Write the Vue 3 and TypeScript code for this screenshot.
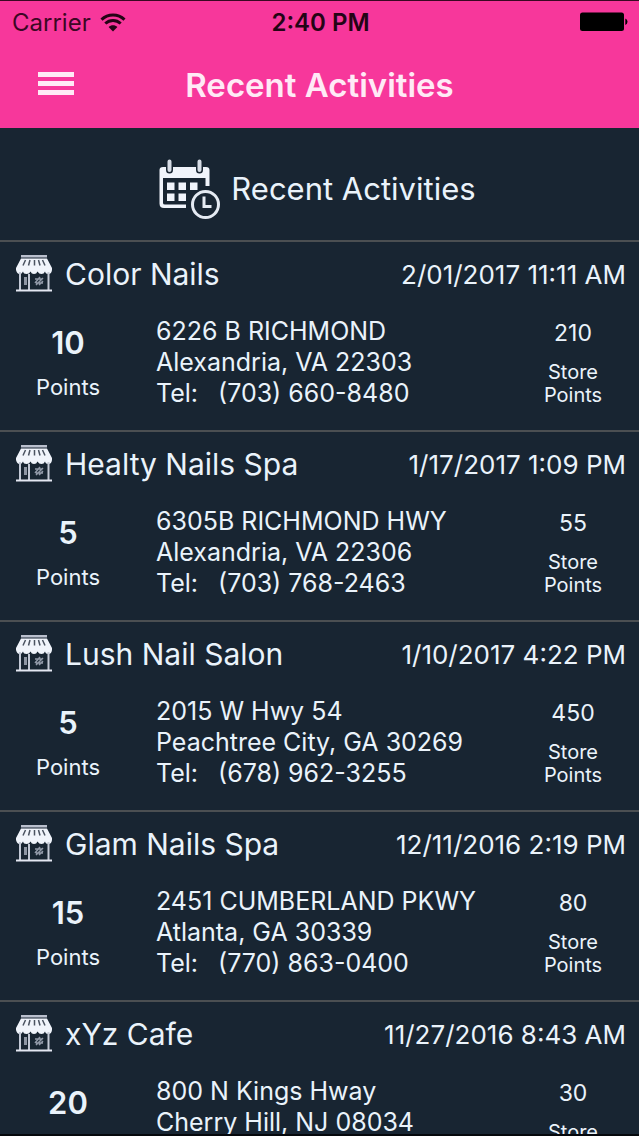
<script setup lang="ts">
interface Activity {
  store: string
  date: string
  points: number
  street: string
  city: string
  phone: string
  storePoints: number
}

const activities: Activity[] = [
  { store: 'Color Nails', date: '2/01/2017 11:11 AM', points: 10, street: '6226 B RICHMOND', city: 'Alexandria, VA 22303', phone: '(703) 660-8480', storePoints: 210 },
  { store: 'Healty Nails Spa', date: '1/17/2017 1:09 PM', points: 5, street: '6305B RICHMOND HWY', city: 'Alexandria, VA 22306', phone: '(703) 768-2463', storePoints: 55 },
  { store: 'Lush Nail Salon', date: '1/10/2017 4:22 PM', points: 5, street: '2015 W Hwy 54', city: 'Peachtree City, GA 30269', phone: '(678) 962-3255', storePoints: 450 },
  { store: 'Glam Nails Spa', date: '12/11/2016 2:19 PM', points: 15, street: '2451 CUMBERLAND PKWY', city: 'Atlanta, GA 30339', phone: '(770) 863-0400', storePoints: 80 },
  { store: 'xYz Cafe', date: '11/27/2016 8:43 AM', points: 20, street: '800 N Kings Hway', city: 'Cherry Hill, NJ 08034', phone: '', storePoints: 30 },
]
</script>

<template>
  <div class="screen">
    <header class="top">
      <div class="status">
        <div class="carrier">
          <span>Carrier</span>
          <svg class="wifi" viewBox="0 0 26 19" aria-hidden="true">
            <path d="M1.500 6.600C8 .4 18 .4 24.500 6.600" />
            <path d="M5.300 10.500C9.800 6.500 16.200 6.500 20.700 10.500" />
            <path class="dot" d="M8.600 14C11 11.600 15 11.600 17.400 14L13 18.500Z" />
          </svg>
        </div>
        <strong class="clock">2:40 PM</strong>
        <svg class="battery" viewBox="0 0 50 20" aria-hidden="true">
          <rect x="1" y="0.500" width="44" height="18.500" rx="2.500" />
          <path d="M46.300 6.500Q48.500 7.500 48.500 9.800T46.300 13Z" />
        </svg>
      </div>
      <div class="nav">
        <button class="menu" type="button" aria-label="Menu">
          <span></span><span></span><span></span>
        </button>
        <h1>Recent Activities</h1>
      </div>
    </header>

    <div class="section">
      <svg class="calendar" viewBox="0 0 62 62" aria-hidden="true">
        <path class="fill" d="M4 9H47Q50.500 9 50.500 12V28H46.500V20H4V45Q4 46.500 6 46.500H27V50H5Q.5 50 .5 45.500V12Q.5 9 4 9Z" />
        <path class="gap" d="M10.500 4V12M40.500 4V12" />
        <path class="ring" d="M10.500 3.500V12M40.500 3.500V12" />
        <path class="fill" d="M8 24.500H15.500V32H8ZM19.500 24.500H27V32H19.500ZM31 24.500H38.500V32H31ZM8 35.500H15.500V43H8ZM19.500 35.500H27V43H19.500Z" />
        <circle class="face" cx="46.500" cy="46.500" r="16.500" />
        <circle class="clock-ring" cx="46.500" cy="46.500" r="13" />
        <path class="hands" d="M45 38.500V48.500H52.500" />
      </svg>
      <h2>Recent Activities</h2>
    </div>

    <main class="list">
      <article v-for="item in activities" :key="item.store" class="activity">
        <div class="head">
          <svg class="shop" viewBox="0 0 36 38" aria-hidden="true">
            <path class="pale" d="M5 1H31V3.500H5Z" />
            <path class="fill" d="M5 4.500H31L36 14V16Q35.500 20 32.500 20T29 17.500Q28 20 25.500 20T21.500 17.500Q20.500 20 18 20T14.500 17.500Q13.500 20 10.500 20T7 17.500Q6 20 3.500 20T0 16V14Z" />
            <path class="stripe" d="M9.500 6L7 11.500M14 6L12.500 11.500M18.500 6V11.500M22.500 6L24 11.500M26.500 6L29 11.500" />
            <path class="frame" d="M4 18V36M32.500 18V36M13 20V36" />
            <path class="floor" d="M0 36.500H36" />
            <path class="pane" d="M8 23H11V31H8Z" />
            <path class="shine" d="M19 29L24 23M20 31L27 24M23 31L27 27M19 25H26M20 29H27" />
          </svg>
          <h3>{{ item.store }}</h3>
          <time>{{ item.date }}</time>
        </div>
        <div class="body">
          <div class="earned">
            <strong>{{ item.points }}</strong>
            <span>Points</span>
          </div>
          <address>
            <span>{{ item.street }}</span>
            <span>{{ item.city }}</span>
            <span v-if="item.phone" class="tel"><span>Tel:</span><span>{{ item.phone }}</span></span>
          </address>
          <div class="balance">
            <b>{{ item.storePoints }}</b>
            <span>Store Points</span>
          </div>
        </div>
      </article>
    </main>
  </div>
</template>

<style>
html,
body {
  background: #182532;
}
</style>

<style scoped>
.screen {
  display: flex;
  flex-direction: column;
  box-sizing: border-box;
  height: 100vh;
  border-bottom: 2px solid #05080c;
  background: #182532;
  color: #eaf3fb;
  font-family: Inter, "Liberation Sans", sans-serif;
}

h1,
h2,
h3 {
  margin: 0;
}

.top {
  flex: none;
  border-top: 1px solid #3a0822;
  background: #f7379b;
}

.status {
  display: grid;
  grid-template-columns: 1fr auto 1fr;
  align-items: center;
  height: 42px;
  padding: 0 10px 0 12px;
  color: #3c0724;
  font-size: 24px;
}

.carrier {
  display: flex;
  align-items: center;
  gap: 9px;
}

.wifi {
  width: 26px;
  height: 19px;
  fill: none;
  stroke: #240415;
  stroke-width: 3;
}

.wifi .dot {
  fill: #240415;
  stroke: none;
}

.clock {
  color: #240415;
  font-weight: 600;
}

.battery {
  justify-self: end;
  width: 50px;
  height: 20px;
}

.nav {
  display: grid;
  grid-template-columns: 80px 1fr 80px;
  align-items: center;
  height: 85px;
}

.menu {
  display: flex;
  flex-direction: column;
  gap: 4px;
  justify-self: end;
  width: 42px;
  padding: 0 6px 4px 0;
  border: 0;
  background: none;
}

.menu span {
  height: 5px;
  background: #ffeaf6;
}

h1 {
  padding-bottom: 2px;
  color: #ffeaf6;
  font-size: 33px;
  font-weight: 600;
  line-height: 40px;
  text-align: center;
}

.section {
  display: flex;
  flex: none;
  align-items: center;
  justify-content: center;
  gap: 10px;
  height: 112px;
  padding: 10px 4px 0 0;
  box-sizing: border-box;
}

.calendar {
  width: 62px;
  height: 62px;
}

.fill {
  fill: #f0f4fb;
}

.gap {
  fill: none;
  stroke: #182532;
  stroke-width: 7;
  stroke-linecap: round;
}

.ring {
  fill: none;
  stroke: #d6dce5;
  stroke-width: 4;
  stroke-linecap: round;
}

.face {
  fill: #182532;
}

.clock-ring,
.hands {
  fill: none;
  stroke: #e4eaf2;
  stroke-width: 3;
}

h2 {
  font-size: 31px;
  font-weight: 400;
  line-height: 40px;
}

.list {
  flex: 1;
  min-height: 0;
  overflow-y: auto;
  scrollbar-width: none;
}

.activity {
  box-sizing: border-box;
  min-height: 190px;
  border-top: 2px solid #4b4f52;
}

.head {
  display: flex;
  align-items: center;
  height: 64px;
  padding: 0 13px 0 16px;
}

.shop {
  flex: none;
  width: 36px;
  height: 38px;
  margin: 0 13px 3px 0;
}

.pale {
  fill: #b9bfcd;
}

.stripe {
  fill: none;
  stroke: #4a5361;
  stroke-width: 1.5;
}

.frame {
  fill: none;
  stroke: #c3c9d6;
  stroke-width: 2;
}

.floor {
  stroke: #e4e8f2;
  stroke-width: 2;
}

.pane {
  fill: #8d95a3;
}

.shine {
  fill: none;
  stroke: #9199a8;
  stroke-width: 1.5;
}

h3 {
  flex: 1;
  font-size: 30px;
  font-weight: 400;
  line-height: 40px;
}

time {
  font-size: 26px;
  white-space: nowrap;
}

.body {
  display: grid;
  grid-template-columns: 136px 1fr 132px;
  column-gap: 20px;
  align-items: start;
}

.earned,
address,
.balance {
  display: flex;
  flex-direction: column;
}

.earned,
.balance {
  align-items: center;
  text-align: center;
}

.earned strong {
  margin-top: 17px;
  font-size: 31px;
  font-weight: 600;
  line-height: 40px;
}

.earned span {
  margin-top: 10px;
  font-size: 22px;
  line-height: 28px;
}

address {
  margin-top: 10px;
  font-size: 25px;
  font-style: normal;
  line-height: 31px;
  white-space: nowrap;
}

.tel {
  display: flex;
  gap: 20px;
}

.balance b {
  margin-top: 11px;
  font-size: 23px;
  font-weight: 400;
  line-height: 32px;
}

.balance span {
  width: 64px;
  margin-top: 12px;
  font-size: 20px;
  line-height: 23px;
}
</style>
